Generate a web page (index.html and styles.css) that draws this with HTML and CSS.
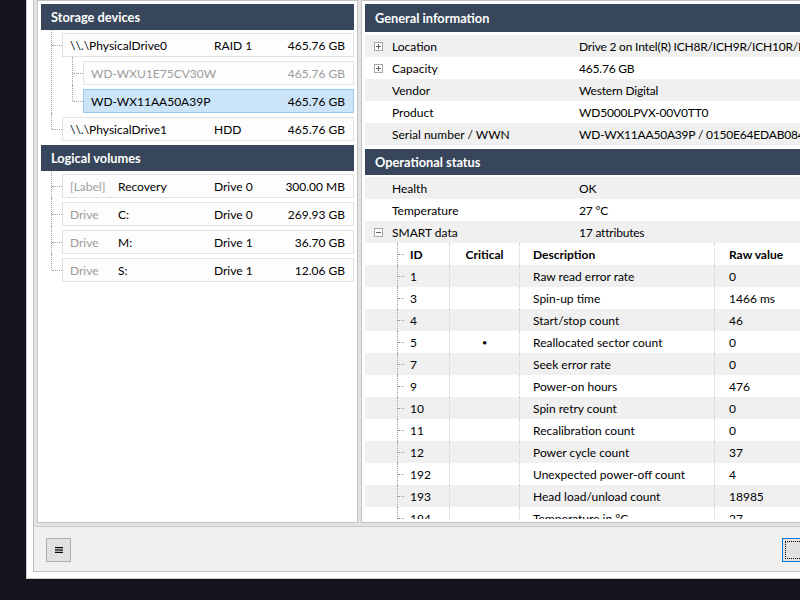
FILE: index.html
```html
<!DOCTYPE html>
<html lang="en">
<head>
<meta charset="utf-8">
<title>Storage devices</title>
<link rel="stylesheet" href="styles.css">
</head>
<body>
<div class="window">
  <div class="frame">
    <div class="content">
      <div class="panel panel-left">
        <div class="panel-body">
          <div class="header">Storage devices</div>
          <div class="tree">
            <div class="node">
              <div class="item"><span class="c-name">\\.\PhysicalDrive0</span><span>RAID 1</span><span class="c-size">465.76 GB</span></div>
              <div class="tree sub">
                <div class="node"><div class="item dim"><span>WD-WXU1E75CV30W</span><span class="c-size">465.76 GB</span></div></div>
                <div class="node"><div class="item selected"><span>WD-WX11AA50A39P</span><span class="c-size">465.76 GB</span></div></div>
              </div>
            </div>
            <div class="node">
              <div class="item"><span class="c-name">\\.\PhysicalDrive1</span><span>HDD</span><span class="c-size">465.76 GB</span></div>
            </div>
          </div>
          <div class="header">Logical volumes</div>
          <div class="tree">
            <div class="node"><div class="item"><span class="c-kind dim">[Label]</span><span class="c-label">Recovery</span><span>Drive 0</span><span class="c-size">300.00 MB</span></div></div>
            <div class="node"><div class="item"><span class="c-kind dim">Drive</span><span class="c-label">C:</span><span>Drive 0</span><span class="c-size">269.93 GB</span></div></div>
            <div class="node"><div class="item"><span class="c-kind dim">Drive</span><span class="c-label">M:</span><span>Drive 1</span><span class="c-size">36.70 GB</span></div></div>
            <div class="node"><div class="item"><span class="c-kind dim">Drive</span><span class="c-label">S:</span><span>Drive 1</span><span class="c-size">12.06 GB</span></div></div>
          </div>
        </div>
      </div>
      <div class="panel panel-right">
        <div class="panel-body">
          <div class="header header-general">General information</div>
          <div class="rows rows-general">
            <div class="row"><svg class="exp" width="9" height="9" viewBox="0 0 9 9"><rect x="0.5" y="0.5" width="8" height="8" fill="#fff" stroke="#a8a8a8"/><path d="M2 4.5h5M4.5 2v5" stroke="#666" stroke-width="1"/></svg><span class="label">Location</span><span class="value">Drive 2 on Intel(R) ICH8R/ICH9R/ICH10R/DO/PCH SATA RAID Controller</span></div>
            <div class="row"><svg class="exp" width="9" height="9" viewBox="0 0 9 9"><rect x="0.5" y="0.5" width="8" height="8" fill="#fff" stroke="#a8a8a8"/><path d="M2 4.5h5M4.5 2v5" stroke="#666" stroke-width="1"/></svg><span class="label">Capacity</span><span class="value">465.76 GB</span></div>
            <div class="row"><span class="exp"></span><span class="label">Vendor</span><span class="value">Western Digital</span></div>
            <div class="row"><span class="exp"></span><span class="label">Product</span><span class="value">WD5000LPVX-00V0TT0</span></div>
            <div class="row"><span class="exp"></span><span class="label">Serial number / WWN</span><span class="value">WD-WX11AA50A39P / 0150E64EDAB084FB</span></div>
          </div>
          <div class="header header-status">Operational status</div>
          <div class="rows">
            <div class="row"><span class="exp"></span><span class="label">Health</span><span class="value">OK</span></div>
            <div class="row"><span class="exp"></span><span class="label">Temperature</span><span class="value">27 °C</span></div>
            <div class="row"><svg class="exp" width="9" height="9" viewBox="0 0 9 9"><rect x="0.5" y="0.5" width="8" height="8" fill="#fff" stroke="#a8a8a8"/><path d="M2 4.5h5" stroke="#666" stroke-width="1"/></svg><span class="label">SMART data</span><span class="value">17 attributes</span></div>
            <div class="row trow thead"><span class="cell c-id">ID</span><span class="cell c-crit">Critical</span><span class="cell c-desc">Description</span><span class="cell c-raw">Raw value</span></div>
            <div class="row trow"><span class="cell c-id">1</span><span class="cell c-crit"></span><span class="cell c-desc">Raw read error rate</span><span class="cell c-raw">0</span></div>
            <div class="row trow"><span class="cell c-id">3</span><span class="cell c-crit"></span><span class="cell c-desc">Spin-up time</span><span class="cell c-raw">1466 ms</span></div>
            <div class="row trow"><span class="cell c-id">4</span><span class="cell c-crit"></span><span class="cell c-desc">Start/stop count</span><span class="cell c-raw">46</span></div>
            <div class="row trow"><span class="cell c-id">5</span><span class="cell c-crit bullet">•</span><span class="cell c-desc">Reallocated sector count</span><span class="cell c-raw">0</span></div>
            <div class="row trow"><span class="cell c-id">7</span><span class="cell c-crit"></span><span class="cell c-desc">Seek error rate</span><span class="cell c-raw">0</span></div>
            <div class="row trow"><span class="cell c-id">9</span><span class="cell c-crit"></span><span class="cell c-desc">Power-on hours</span><span class="cell c-raw">476</span></div>
            <div class="row trow"><span class="cell c-id">10</span><span class="cell c-crit"></span><span class="cell c-desc">Spin retry count</span><span class="cell c-raw">0</span></div>
            <div class="row trow"><span class="cell c-id">11</span><span class="cell c-crit"></span><span class="cell c-desc">Recalibration count</span><span class="cell c-raw">0</span></div>
            <div class="row trow"><span class="cell c-id">12</span><span class="cell c-crit"></span><span class="cell c-desc">Power cycle count</span><span class="cell c-raw">37</span></div>
            <div class="row trow"><span class="cell c-id">192</span><span class="cell c-crit"></span><span class="cell c-desc">Unexpected power-off count</span><span class="cell c-raw">4</span></div>
            <div class="row trow"><span class="cell c-id">193</span><span class="cell c-crit"></span><span class="cell c-desc">Head load/unload count</span><span class="cell c-raw">18985</span></div>
            <div class="row trow"><span class="cell c-id">194</span><span class="cell c-crit"></span><span class="cell c-desc">Temperature in °C</span><span class="cell c-raw">27</span></div>
          </div>
        </div>
      </div>
    </div>
    <div class="footer">
      <button class="btn btn-menu" type="button" aria-label="Menu"><svg width="8" height="6" viewBox="0 0 8 6"><rect x="0" y="0" width="8" height="1.2" fill="#000"/><rect x="0" y="2.4" width="8" height="1.2" fill="#000"/><rect x="0" y="4.8" width="8" height="1.2" fill="#000"/></svg></button>
      <button class="btn btn-close" type="button"><span class="focus">Close</span></button>
    </div>
  </div>
</div>
</body>
</html>
```

FILE: styles.css
```css
* { box-sizing: border-box; }

html, body {
  margin: 0;
  padding: 0;
}

body {
  width: 800px;
  height: 600px;
  overflow: hidden;
  background: #15141e;
  font-family: Lato, "Noto Sans", "DejaVu Sans", sans-serif;
  font-size: 12px;
  color: #000;
}

.window {
  width: 851px;
  height: 590px;
  margin: -11px 0 0 26px;
  border: 1px solid #cdcdcd;
  background: #fff;
  padding: 6px;
  display: flex;
  flex-direction: column;
}

.frame {
  flex: 1;
  min-height: 0;
  border: 1px solid #bfbfbf;
  display: flex;
  flex-direction: column;
}

.content {
  flex: 1;
  min-height: 0;
  background: #e3e3e3;
  padding: 3px;
  display: flex;
  gap: 3px;
}

.panel {
  background: #fff;
  border: 1px solid #c2c2c2;
  padding: 3px;
  display: flex;
  flex-direction: column;
  min-height: 0;
}

.panel-left { width: 321px; flex: none; }
.panel-right { flex: 1; min-width: 0; }

.panel-body {
  flex: 1;
  min-height: 0;
  overflow: hidden;
}

.header {
  height: 26px;
  background: #37465a;
  color: #fff;
  font-weight: 700;
  font-size: 12.8px;
  padding-left: 10px;
  display: flex;
  align-items: center;
  white-space: nowrap;
}

/* ---------- tree (left) ---------- */
.tree {
  display: flex;
  flex-direction: column;
  gap: 4px;
  padding-top: 3px;
  margin-bottom: 4px;
}

.tree.sub {
  padding-top: 4px;
  margin-bottom: 0;
}

.node {
  position: relative;
  padding-left: 21px;
}

.node::before {
  content: "";
  position: absolute;
  left: 10px;
  top: -4px;
  bottom: 0;
  border-left: 1px dotted #a0a0a0;
}

.tree > .node:first-child::before { top: -3px; }
.tree.sub > .node:first-child::before { top: -4px; }

.node:last-child::before {
  bottom: auto;
  height: 16px;
}

.node::after {
  content: "";
  position: absolute;
  left: 11px;
  top: 12px;
  width: 10px;
  border-top: 1px dotted #a0a0a0;
}

.item {
  height: 24px;
  border: 1px solid #e2e2e2;
  background: #fdfdfd;
  display: flex;
  align-items: center;
  padding: 0 8px 0 7px;
  white-space: nowrap;
}

.item.selected {
  background: #cce4f7;
  border-color: #99c9ef;
}

.dim { color: #9c9c9c; }

.c-name { width: 144px; flex: none; }
.c-kind { width: 48px; flex: none; }
.c-label { width: 96px; flex: none; }
.c-size { margin-left: auto; }

/* ---------- details (right) ---------- */
.header-general {
  height: 28px;
  margin-bottom: 3px;
}

.rows-general { margin-bottom: 4px; }

.header-status { margin-bottom: 2px; }

.row {
  height: 22px;
  display: flex;
  align-items: center;
  padding-left: 9px;
  white-space: nowrap;
  position: relative;
}

.rows > .row:nth-child(odd) { background: #f0f0f1; }

.exp {
  width: 9px;
  height: 9px;
  margin-right: 9px;
  flex: none;
  display: block;
}

.label { width: 187px; flex: none; }

.value { letter-spacing: -0.2px; }

.trow {
  display: grid;
  grid-template-columns: 53px 70px 195px 1fr;
  padding-left: 31px;
}

.trow::before {
  content: "";
  position: absolute;
  left: 32px;
  top: 0;
  bottom: 0;
  border-left: 1px dotted #a0a0a0;
}

.trow::after {
  content: "";
  position: absolute;
  left: 33px;
  top: 11px;
  width: 6px;
  border-top: 1px dotted #a0a0a0;
}

.thead { font-weight: 700; }

.cell {
  height: 22px;
  display: flex;
  align-items: center;
  overflow: hidden;
}

.cell + .cell { border-left: 1px dotted #cfcfcf; }

.c-id { padding-left: 14px; }
.c-crit { justify-content: center; }
.c-crit.bullet { font-size: 9px; }
.c-desc { padding-left: 13px; }
.c-raw { padding-left: 14px; }

/* ---------- footer ---------- */
.footer {
  height: 45px;
  flex: none;
  border-top: 1px solid #cbcbcb;
  background: #f0f0f0;
  padding: 11px 12px 0;
  display: flex;
  justify-content: space-between;
  align-items: flex-start;
}

.btn {
  height: 24px;
  margin: 0;
  font: inherit;
  background: #e1e1e1;
  border: 1px solid #adadad;
  border-radius: 0;
}

.btn-menu {
  width: 25px;
  padding: 0;
  display: flex;
  align-items: center;
  justify-content: center;
}

.btn-close {
  width: 75px;
  padding: 2px;
  border-color: #0078d7;
}

.focus {
  display: flex;
  align-items: center;
  justify-content: center;
  height: 100%;
  border: 1px dotted #000;
}
```
